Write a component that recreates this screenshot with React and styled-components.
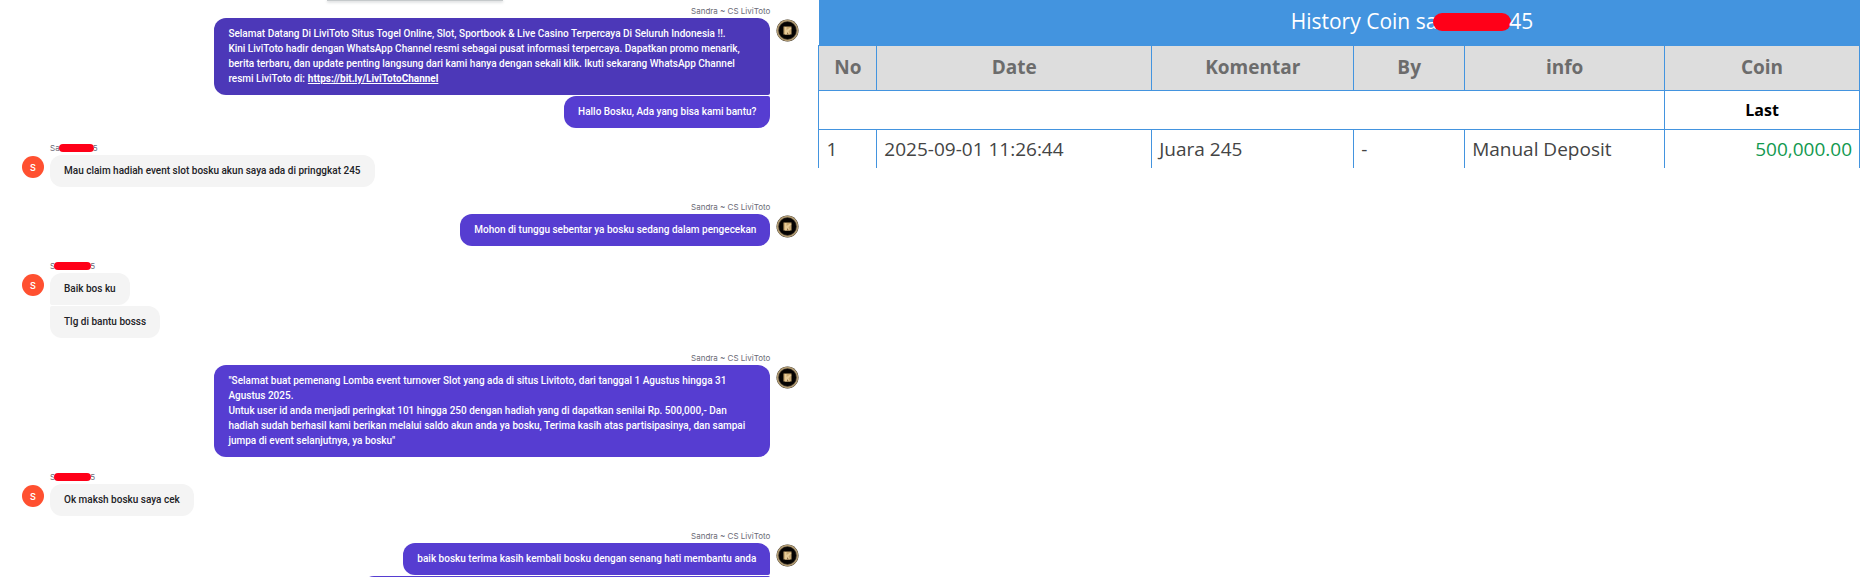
import React from "react";
import styled, { createGlobalStyle } from "styled-components";

const conversation = [
  {
    agent: true,
    messages: [
      {
        lines: [
          "Selamat Datang Di LiviToto Situs Togel Online, Slot, Sportbook & Live Casino Terpercaya Di Seluruh Indonesia !!.",
          "Kini LiviToto hadir dengan WhatsApp Channel resmi sebagai pusat informasi terpercaya. Dapatkan promo menarik,",
          "berita terbaru, dan update penting langsung dari kami hanya dengan sekali klik. Ikuti sekarang WhatsApp Channel",
          "resmi LiviToto di:",
        ],
        link: "https://bit.ly/LiviTotoChannel",
        dark: true,
        size: "556px",
      },
      { lines: ["Hallo Bosku, Ada yang bisa kami bantu?"] },
    ],
  },
  {
    prefix: "Sa",
    messages: [
      {
        lines: [
          "Mau claim hadiah event slot bosku akun saya ada di pringgkat 245",
        ],
      },
    ],
  },
  {
    agent: true,
    messages: [
      { lines: ["Mohon di tunggu sebentar ya bosku sedang dalam pengecekan"] },
    ],
  },
  {
    prefix: "S",
    messages: [{ lines: ["Baik bos ku"] }, { lines: ["Tlg di bantu bosss"] }],
  },
  {
    agent: true,
    messages: [
      {
        lines: [
          '"Selamat buat pemenang Lomba event turnover Slot yang ada di situs Livitoto, dari tanggal 1 Agustus hingga 31',
          "Agustus 2025.",
          "Untuk user id anda menjadi peringkat 101 hingga 250 dengan hadiah yang di dapatkan senilai Rp. 500,000,- Dan",
          "hadiah sudah berhasil kami berikan melalui saldo akun anda ya bosku, Terima kasih atas partisipasinya, dan sampai",
          'jumpa di event selanjutnya, ya bosku"',
        ],
        size: "556px",
      },
    ],
  },
  {
    prefix: "S",
    messages: [{ lines: ["Ok maksh bosku saya cek"] }],
  },
  {
    agent: true,
    messages: [
      {
        lines: [
          "baik bosku terima kasih kembali bosku dengan senang hati membantu anda",
        ],
      },
      { lines: [], size: "408px" },
    ],
  },
];

const AgentAvatar = () => (
  <Logo viewBox='0 0 46 46' role='img' aria-label='LiviToto'>
    <circle cx='23' cy='23' r='22' fill='#3b3228' />
    <circle cx='23' cy='23' r='20' fill='none' stroke='#b39d74' strokeWidth='3' />
    <circle cx='23' cy='23' r='17' fill='#050302' />
    <path d='M15 15h16v16H15z' fill='#c9a871' />
    <path d='M18 16h3v6l6-4h4l-6 7 3 6H18z' fill='#e6cb98' />
    <path d='M22 26l4 5h-4z' fill='#8d6c42' />
  </Logo>
);

const Group = ({ agent, prefix, messages }) => (
  <GroupRow $agent={agent}>
    {agent ? <AgentAvatar /> : <Initial>S</Initial>}
    <Stack $agent={agent}>
      <Sender>
        {agent ? (
          "Sandra ~ CS LiviToto"
        ) : (
          <>
            {prefix}
            <Censor $short={prefix.length > 1} />5
          </>
        )}
      </Sender>
      {messages.map(({ lines, link, dark, size }, i) => (
        <Bubble
          key={i}
          $agent={agent}
          $dark={dark}
          $size={size}
          $first={i === 0 && messages.length > 1}
          $last={i > 0}
        >
          {lines.map((line, n) => (
            <Line key={line}>
              <span>{line}</span>
              {link && n === lines.length - 1 && <Link href={link}>{link}</Link>}
            </Line>
          ))}
        </Bubble>
      ))}
    </Stack>
  </GroupRow>
);

const History = () => (
  <Table>
    <colgroup>
      <Col $share={58} />
      <Col $share={275} />
      <Col $share={202} />
      <Col $share={111} />
      <Col $share={200} />
      <Col $share={195} />
    </colgroup>
    <thead>
      <tr>
        <Title colSpan={6}>
          History Coin sa
          <TitleCensor />
          45
        </Title>
      </tr>
      <tr>
        <Heading>No</Heading>
        <Heading>Date</Heading>
        <Heading>Komentar</Heading>
        <Heading>By</Heading>
        <Heading>info</Heading>
        <Heading>Coin</Heading>
      </tr>
    </thead>
    <tbody>
      <tr>
        <Cell colSpan={5} />
        <Last>Last</Last>
      </tr>
      <tr>
        <Cell>1</Cell>
        <Cell>2025-09-01 11:26:44</Cell>
        <Cell>Juara 245</Cell>
        <Cell>-</Cell>
        <Cell>Manual Deposit</Cell>
        <Amount>500,000.00</Amount>
      </tr>
    </tbody>
  </Table>
);

const App = () => (
  <>
    <GlobalStyle />
    <Page>
      <Chat>
        <Banner />
        {conversation.map((group, i) => (
          <Group key={i} {...group} />
        ))}
      </Chat>
      <History />
    </Page>
  </>
);

export default App;

const GlobalStyle = createGlobalStyle`
  * {
    box-sizing: border-box;
  }

  body {
    margin: 0;
    background-color: #fff;
  }
`;

const Page = styled.main`
  display: grid;
  grid-template-columns: minmax(0, 11fr) minmax(0, 14fr);
  align-items: start;
  height: 100vh;
  overflow: hidden;
`;

const Chat = styled.section`
  display: flex;
  flex-direction: column;
  gap: 14px;
  padding: 0 19px 0 22px;
  font-family: Roboto, Inter, sans-serif;
`;

const Banner = styled.div`
  align-self: center;
  width: 176px;
  height: 1px;
  margin: 0 0 -10px 8px;
  background-color: #c5c9cb;
  box-shadow: 0 1px 3px #a9adb0;
`;

const GroupRow = styled.article`
  display: flex;
  flex-direction: ${({ $agent }) => ($agent ? "row-reverse" : "row")};
  align-items: flex-start;
  gap: 6px;
`;

const Stack = styled.div`
  display: flex;
  flex-direction: column;
  align-items: ${({ $agent }) => ($agent ? "flex-end" : "flex-start")};
  gap: 1px;
  min-width: 0;
`;

const Sender = styled.div`
  display: flex;
  align-items: center;
  height: 12px;
  font-family: Inter, sans-serif;
  font-size: 8px;
  line-height: 12px;
  color: #6b6b76;
`;

const Censor = styled.span`
  width: ${({ $short }) => ($short ? 35 : 37)}px;
  height: 8px;
  margin: 0 -1px;
  border-radius: 4px;
  background-color: #ff0018;
`;

const Bubble = styled.p`
  width: ${({ $size }) => $size || "auto"};
  max-width: 100%;
  min-height: 32px;
  margin: 0;
  padding: 8px 14px 9px;
  border-radius: 12px;
  ${({ $agent, $first }) =>
    $first && `border-bottom-${$agent ? "right" : "left"}-radius: 2px;`}
  ${({ $agent, $last }) =>
    $last && `border-top-${$agent ? "right" : "left"}-radius: 2px;`}
  background-color: ${({ $agent, $dark }) =>
    $dark ? "#4c38b8" : $agent ? "#563dd1" : "#f4f4f4"};
  color: ${({ $agent }) => ($agent ? "#fff" : "#222226")};
  font-size: 10px;
  font-weight: 500;
  line-height: 15px;
`;

const Line = styled.span`
  display: flex;
  gap: 3px;
`;

const Link = styled.a`
  color: inherit;
  font-weight: 700;
`;

const Initial = styled.span`
  display: flex;
  flex: none;
  align-items: center;
  justify-content: center;
  width: 22px;
  height: 22px;
  margin-top: 14px;
  border-radius: 50%;
  background-color: #ff5030;
  color: #fff;
  font-family: Inter, sans-serif;
  font-size: 9px;
  font-weight: 600;
`;

const Logo = styled.svg`
  flex: none;
  width: 23px;
  height: 23px;
  margin-top: 14px;
`;

const Table = styled.table`
  width: 100%;
  table-layout: fixed;
  border-collapse: collapse;
  font-family: "Open Sans", "Noto Sans", sans-serif;
  font-size: 19px;
  line-height: 24px;
  color: #444;
`;

const Col = styled.col`
  width: ${({ $share }) => ($share / 1041) * 100}%;
`;

const Cell = styled.td`
  height: 39px;
  padding: 0 7px;
  border: 1px solid #4394df;
  border-bottom: none;
`;

const Amount = styled(Cell)`
  color: #12994f;
  text-align: right;
`;

const Last = styled(Cell)`
  color: #000;
  font-size: 16px;
  font-weight: 700;
  text-align: center;
`;

const Heading = styled.th`
  height: 45px;
  padding: 0 0 2px;
  border: 1px solid #4394df;
  background-color: #ddd;
  color: #6c6c6c;
`;

const Title = styled.th`
  height: 45px;
  padding: 0 0 2px 14%;
  background-color: #4394df;
  color: #fff;
  font-size: 21px;
  font-weight: 400;
`;

const TitleCensor = styled.span`
  display: inline-block;
  width: 78px;
  height: 18px;
  margin: 0 -2px 0 -4px;
  border-radius: 9px;
  background-color: #ff0018;
  vertical-align: -2px;
`;
